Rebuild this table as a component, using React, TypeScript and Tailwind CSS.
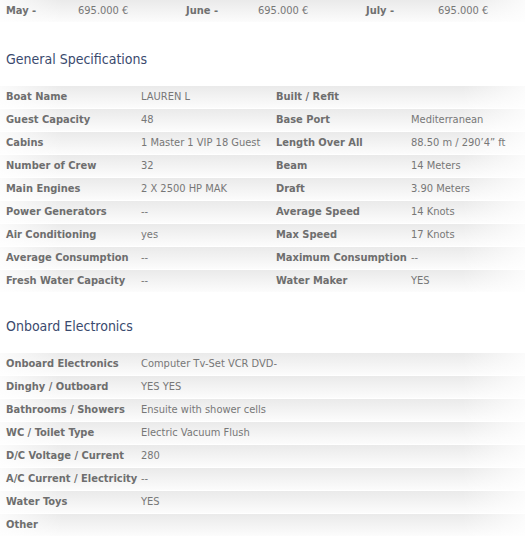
import React from "react";

const prices = [
  { month: "May -", price: "695.000 €" },
  { month: "June -", price: "695.000 €" },
  { month: "July -", price: "695.000 €" },
];

const general: [string, string, string, string][] = [
  ["Boat Name", "LAUREN L", "Built / Refit", ""],
  ["Guest Capacity", "48", "Base Port", "Mediterranean"],
  ["Cabins", "1 Master 1 VIP 18 Guest", "Length Over All", "88.50 m / 290’4” ft"],
  ["Number of Crew", "32", "Beam", "14 Meters"],
  ["Main Engines", "2 X 2500 HP MAK", "Draft", "3.90 Meters"],
  ["Power Generators", "--", "Average Speed", "14 Knots"],
  ["Air Conditioning", "yes", "Max Speed", "17 Knots"],
  ["Average Consumption", "--", "Maximum Consumption", "--"],
  ["Fresh Water Capacity", "--", "Water Maker", "YES"],
];

const electronics: [string, string][] = [
  ["Onboard Electronics", "Computer Tv-Set VCR DVD-"],
  ["Dinghy / Outboard", "YES YES"],
  ["Bathrooms / Showers", "Ensuite with shower cells"],
  ["WC / Toilet Type", "Electric Vacuum Flush"],
  ["D/C Voltage / Current", "280"],
  ["A/C Current / Electricity", "--"],
  ["Water Toys", "YES"],
  ["Other", ""],
];

// soft grey band per row, lighter at the edges, white hairline on top
const rowBg =
  "bg-[linear-gradient(to_right,rgba(255,255,255,0.8),rgba(255,255,255,0)_12%,rgba(255,255,255,0)_88%,rgba(255,255,255,0.8)),linear-gradient(to_bottom,#eaeaea,#fcfcfc)] border-t border-white";

function Heading({ children }: { children: React.ReactNode }) {
  return (
    <h2 className="px-[6px] text-[14px] leading-[18px] text-[#3a4a6e]">{children}</h2>
  );
}

export default function App() {
  return (
    <div
      className="w-[525px] h-[545px] overflow-hidden bg-white text-[11px] text-[#777]"
      style={{ fontFamily: '"DejaVu Sans Condensed", "DejaVu Sans", sans-serif' }}
    >
      <div className={`flex h-[23px] items-center -mt-px ${rowBg}`}>
        {prices.map((p) => (
          <div key={p.month} className="flex w-[180px] shrink-0 pl-[6px]">
            <span className="w-[72px] font-bold text-[#707070]">{p.month}</span>
            <span>{p.price}</span>
          </div>
        ))}
      </div>

      <div className="mt-[28px]">
        <Heading>General Specifications</Heading>
      </div>

      <div className="mt-[17px]">
        {general.map((r) => (
          <div key={r[0]} className={`grid h-[23px] grid-cols-[135px_135px_135px_120px] items-center ${rowBg}`}>
            <span className="pl-[6px] font-bold text-[#6e6e6e] whitespace-nowrap">{r[0]}</span>
            <span className="pl-[6px] whitespace-nowrap">{r[1]}</span>
            <span className="pl-[6px] font-bold text-[#6e6e6e] whitespace-nowrap">{r[2]}</span>
            <span className="pl-[6px] whitespace-nowrap">{r[3]}</span>
          </div>
        ))}
      </div>

      <div className="mt-[25px]">
        <Heading>Onboard Electronics</Heading>
      </div>

      <div className="mt-[17px]">
        {electronics.map((r) => (
          <div key={r[0]} className={`grid h-[23px] grid-cols-[135px_1fr] items-center ${rowBg}`}>
            <span className="pl-[6px] font-bold text-[#6e6e6e] whitespace-nowrap">{r[0]}</span>
            <span className="pl-[6px] whitespace-nowrap">{r[1]}</span>
          </div>
        ))}
      </div>
    </div>
  );
}
